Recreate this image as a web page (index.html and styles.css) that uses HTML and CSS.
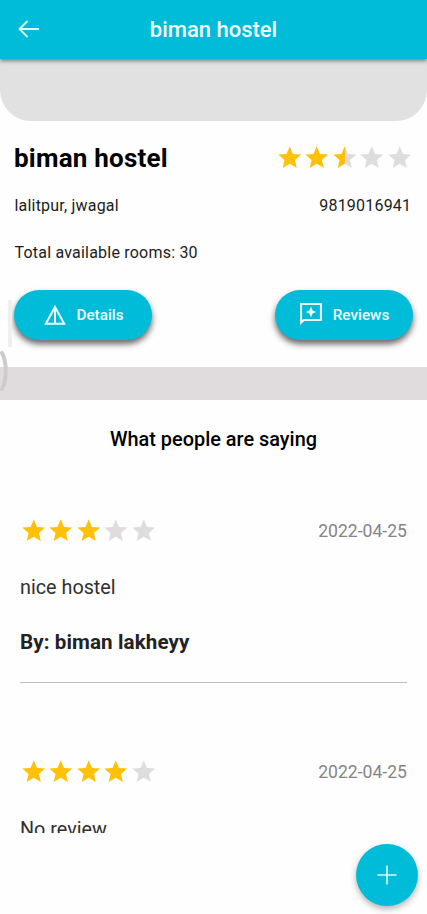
FILE: index.html
```html
<!DOCTYPE html>
<html lang="en">
<head>
<meta charset="utf-8">
<title>biman hostel</title>
<link rel="stylesheet" href="styles.css">
</head>
<body>
<svg class="defs" aria-hidden="true">
  <linearGradient id="half"><stop offset=".5" stop-color="#ffc107"/><stop offset=".5" stop-color="#e0dcdd"/></linearGradient>
  <symbol id="star" viewBox="0 0 24 24"><path d="M12 17.27 18.18 21l-1.64-7.03L22 9.24l-7.19-.61L12 2 9.19 8.63 2 9.24l5.46 4.73L5.82 21z"/></symbol>
</svg>
<div class="app">
  <header class="bar">
    <svg class="back" viewBox="0 0 22 18"><path d="M21 9H1.5M9.5 1 1.5 9l8 8"/></svg>
    <h1 class="bar-title">biman hostel</h1>
  </header>
  <div class="banner"></div>
  <section class="info">
    <div class="row name-row">
      <h2 class="name">biman hostel</h2>
      <div class="stars"><svg class="on"><use href="#star"/></svg><svg class="on"><use href="#star"/></svg><svg class="half"><use href="#star"/></svg><svg><use href="#star"/></svg><svg><use href="#star"/></svg></div>
    </div>
    <div class="row contact"><span class="address">lalitpur, jwagal</span><span class="phone">9819016941</span></div>
    <p class="rooms">Total available rooms: 30</p>
    <div class="row actions">
      <button class="pill details"><svg viewBox="0 0 22 20"><path d="M11 2 1.8 18.8h18.4zM11 3v15.5" fill="none" stroke="currentColor" stroke-width="2"/></svg><span>Details</span></button>
      <button class="pill reviews-btn"><svg viewBox="0 0 22 22"><path d="M1.1 19V1.1h19.8v15.8H4z" fill="none" stroke="currentColor" stroke-width="2"/><path d="M0 17v5l5-5zM11 3.8l1.6 3.6L16.2 9l-3.6 1.6L11 14.2l-1.6-3.6L5.800 9l3.600-1.600z" fill="currentColor"/></svg><span>Reviews</span></button>
    </div>
    <i class="edge-line"></i>
    <svg class="edge-curve" viewBox="0 0 9 40"><path d="M2 2c5 9 5 27 0 36"/></svg>
  </section>
  <div class="separator"></div>
  <section class="feed">
    <h3 class="feed-title">What people are saying</h3>
    <article class="review first">
      <div class="row review-head">
        <div class="stars"><svg class="on"><use href="#star"/></svg><svg class="on"><use href="#star"/></svg><svg class="on"><use href="#star"/></svg><svg><use href="#star"/></svg><svg><use href="#star"/></svg></div>
        <time class="date">2022-04-25</time>
      </div>
      <p class="comment">nice hostel</p>
      <p class="author">By: biman lakheyy</p>
    </article>
    <article class="review">
      <div class="row review-head">
        <div class="stars"><svg class="on"><use href="#star"/></svg><svg class="on"><use href="#star"/></svg><svg class="on"><use href="#star"/></svg><svg class="on"><use href="#star"/></svg><svg><use href="#star"/></svg></div>
        <time class="date">2022-04-25</time>
      </div>
      <p class="comment">No review</p>
    </article>
  </section>
  <button class="fab" aria-label="Add review"><svg viewBox="0 0 20 20"><path d="M10 .5v19M.5 10h19"/></svg></button>
</div>
</body>
</html>
```
FILE: styles.css
```css
* { box-sizing: border-box; margin: 0; padding: 0; }
body { background: #fefefe; font-family: Roboto, sans-serif; color: #000; }
button { border: 0; font: inherit; color: #fff; background: #00bcd9; }
svg { display: block; }
.defs { position: absolute; width: 0; height: 0; }
.app { position: relative; height: 914px; overflow: hidden; }
.row { display: flex; justify-content: space-between; align-items: center; }

.bar { position: relative; z-index: 1; display: grid; grid-template-columns: 60px 1fr 60px; align-items: center; height: 59px; background: #00bcd9; box-shadow: 0 2px 4px rgba(0, 0, 0, .45); }
.back { width: 22px; height: 18px; margin: -1px 0 0 18px; fill: none; stroke: #e2faff; stroke-width: 1.8; }
.bar-title { color: #f3feff; font-size: 22px; font-weight: 500; line-height: 28px; text-align: center; white-space: nowrap; }
.banner { height: 61.500px; background: #e1e1e1; border-radius: 0 0 31px 31px; }

.info { position: relative; height: 246.500px; padding: 23.500px 14px 0; }
.name-row { height: 28px; }
.name { font-size: 26px; font-weight: 700; line-height: 28px; letter-spacing: .22px; white-space: nowrap; }
.stars { display: flex; fill: #e0dcdd; }
.stars svg { width: 27.500px; height: 27.500px; }
.stars .on { fill: #ffc107; }
.stars .half { fill: url(#half); }
.contact { height: 20px; margin-top: 23px; padding: 0 1.800px 0 .5px; font-size: 16px; letter-spacing: .2px; color: #1c1c1c; }
.rooms { height: 20px; margin-top: 28px; padding-left: .5px; font-size: 16px; line-height: 20px; letter-spacing: .21px; color: #1c1c1c; }
.actions { margin-top: 26.500px; }
.pill { display: flex; align-items: center; justify-content: center; gap: 10.500px; width: 138px; height: 50px; padding-left: 1.500px; border-radius: 25px; box-shadow: 0 4px 6px rgba(0, 0, 0, .6); font-size: 15.300px; font-weight: 500; color: #effdff; }
.pill svg { width: 22px; height: 20px; }
.reviews-btn svg { height: 22px; margin-top: -2px; }
.edge-line { position: absolute; left: 8px; top: 179px; width: 4px; height: 47px; background: #efefef; }
.edge-curve { position: absolute; z-index: 1; left: 0; top: 230px; width: 9px; height: 40px; fill: none; stroke: #cdcccc; stroke-width: 4; stroke-linecap: round; }

.separator { height: 32.500px; background: #e0dcdd; }
.feed { height: 433.500px; padding: 28px 20px 0; overflow: hidden; }
.feed-title { font-size: 19.900px; font-weight: 500; line-height: 24px; text-align: center; }
.review-head { height: 28px; }
.review .stars { margin-left: -.3px; }
.date { font-size: 17.600px; color: #858585; }
.comment { margin-top: 31.500px; font-size: 19.800px; line-height: 24px; color: #303030; }
.author { margin-top: 28.500px; font-size: 20.600px; font-weight: 700; line-height: 26px; letter-spacing: .1px; color: #222; }
.first { height: 166.500px; margin: 65px 0 75px; border-bottom: 1px solid #bcbcbc; }

.fab { position: absolute; left: 356px; top: 844px; display: grid; place-items: center; width: 62px; height: 62px; border-radius: 50%; box-shadow: 0 3px 6px rgba(0, 0, 0, .3); }
.fab svg { width: 20px; height: 20px; fill: none; stroke: #dcfaff; stroke-width: 1.6; }
```
